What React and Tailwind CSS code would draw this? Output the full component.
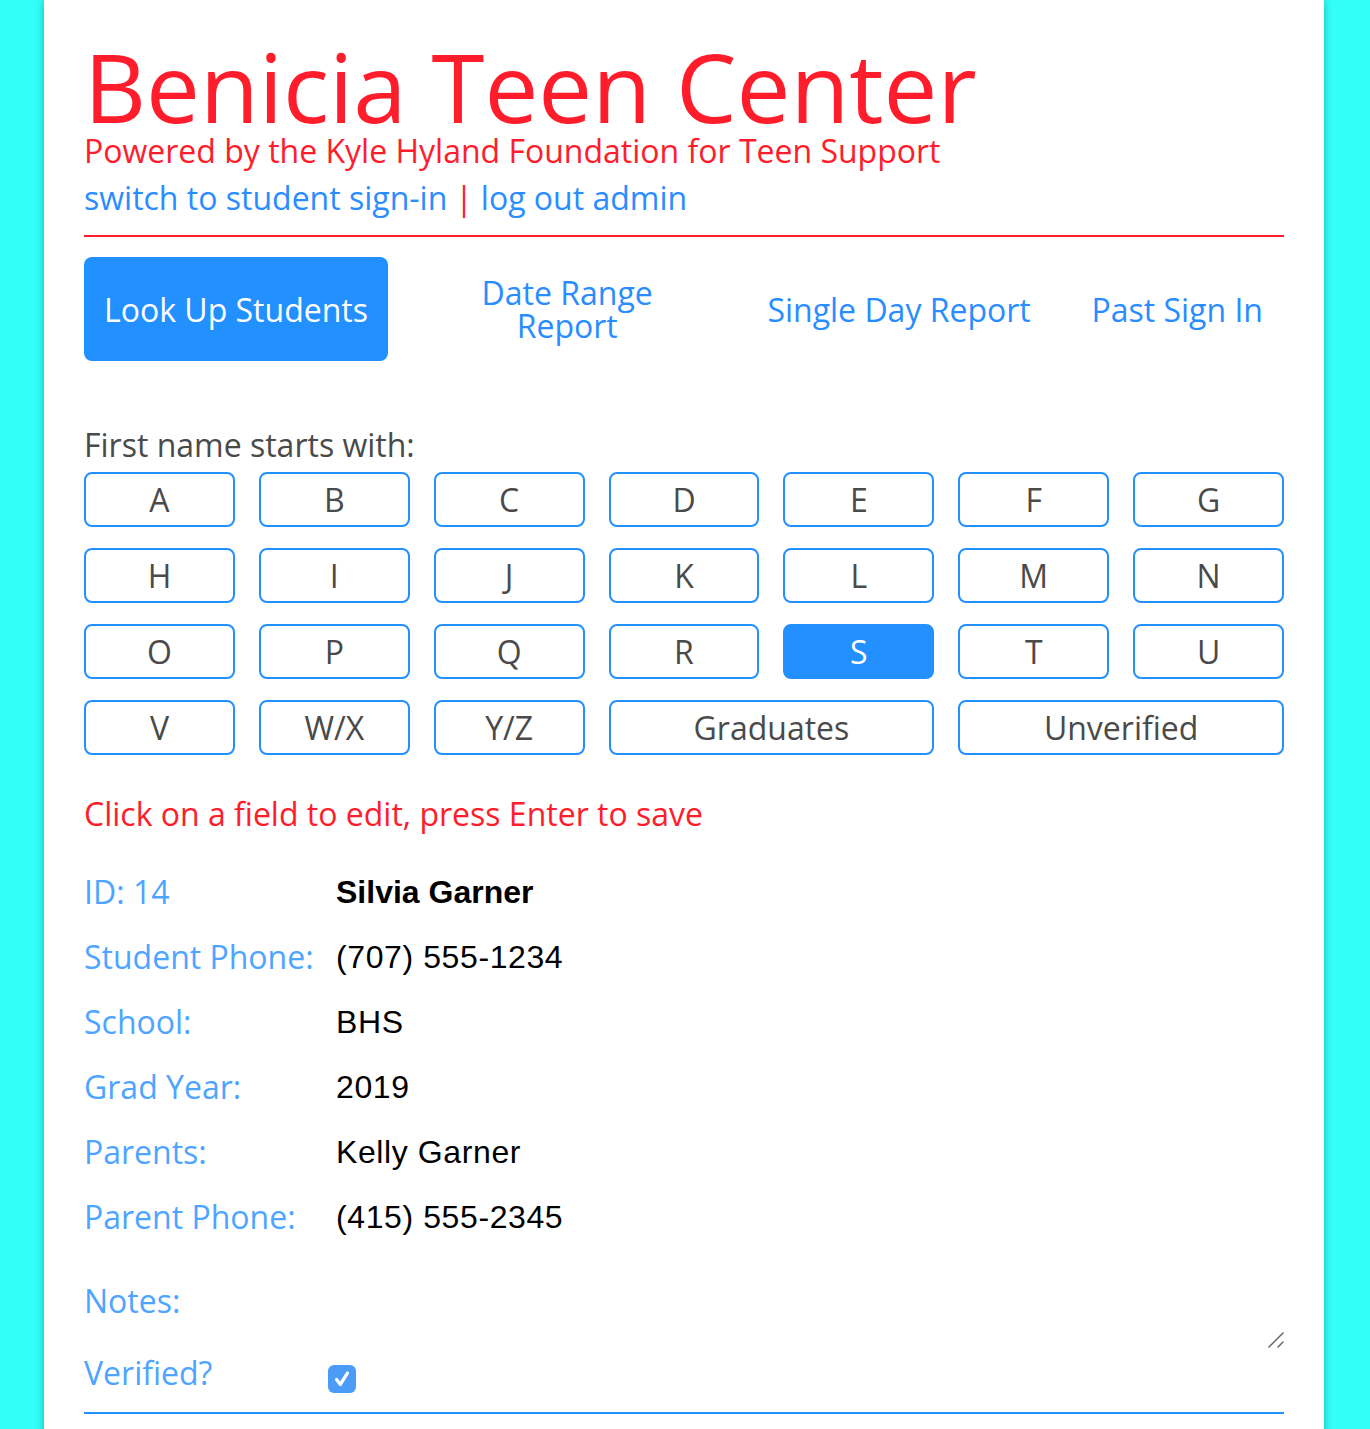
import { useState } from "react"

const letters = ["A", "B", "C", "D", "E", "F", "G", "H", "I", "J", "K", "L", "M", "N", "O", "P", "Q", "R", "S", "T", "U", "V", "W/X", "Y/Z"]

const fields = [
  { label: "Student Phone:", value: "(707) 555-1234" },
  { label: "School:", value: "BHS" },
  { label: "Grad Year:", value: "2019" },
  { label: "Parents:", value: "Kelly Garner" },
  { label: "Parent Phone:", value: "(415) 555-2345" }
]

const open = "font-['Open_Sans',sans-serif]"
const helv = "font-['Liberation_Sans',Arial,sans-serif]"

function LetterButton({ label, active, onClick, wide }) {
  return (
    <button
      onClick={onClick}
      className={`h-[55px] rounded-[8px] border-2 border-[#2290ff] text-[32px] leading-none ${open} ${
        wide ? "col-span-2" : ""
      } ${active ? "bg-[#2290ff] text-white" : "bg-white text-[#4a4a4a]"}`}
    >
      {label}
    </button>
  )
}

export default function App() {
  const [letter, setLetter] = useState("S")

  return (
    <div className="min-h-screen bg-[#33fff9]">
      <div className={`ml-[44px] w-[1280px] bg-white px-10 pt-[38px] pb-16 shadow-[0_0_8px_rgba(0,80,80,0.45)] ${open}`}>
        <h1 className="text-[96px] leading-[96px] text-[#ff1c2b]">Benicia Teen Center</h1>
        <p className="text-[32px] leading-[34px] text-[#ff1c2b]">Powered by the Kyle Hyland Foundation for Teen Support</p>
        <div className="mt-[13px] text-[32px] leading-[34px] text-[#2a8dff]">
          <a>switch to student sign-in</a>
          <span className="mx-[8px] text-[#ff1c2b]">|</span>
          <a>log out admin</a>
        </div>
        <div className="mt-[20px] h-[2px] bg-[#ff1c2b]" />

        <nav className="mt-[20px] flex items-center justify-between text-[32px] leading-[33px] text-[#2a8dff]">
          <button className="h-[104px] rounded-[8px] bg-[#2290ff] px-[20px] text-white">Look Up Students</button>
          <button className="w-[321px] text-center">
            <span className="block">Date Range</span>
            <span className="block">Report</span>
          </button>
          <button className="px-[21px]">Single Day Report</button>
          <button className="px-[21px]">Past Sign In</button>
        </nav>

        <p className="mt-[67px] text-[32px] leading-[34px] text-[#4a4a4a]">First name starts with:</p>
        <div className="mt-[10px] grid grid-cols-7 gap-x-[24px] gap-y-[21px]">
          {letters.map(l => (
            <LetterButton key={l} label={l} active={letter === l} onClick={() => setLetter(l)} />
          ))}
          <LetterButton label="Graduates" wide active={letter === "Graduates"} onClick={() => setLetter("Graduates")} />
          <LetterButton label="Unverified" wide active={letter === "Unverified"} onClick={() => setLetter("Unverified")} />
        </div>

        <p className="mt-[42px] text-[32px] leading-[34px] text-[#ff1c2b]">Click on a field to edit, press Enter to save</p>

        <div className="mt-[28px] text-[32px] leading-[34px]">
          <div className="flex h-[65px] items-center">
            <span className="w-[252px] text-[#4ea5ff]">ID: 14</span>
            <span className={`${helv} font-bold text-black`}>Silvia Garner</span>
          </div>
          {fields.map(f => (
            <div key={f.label} className="flex h-[65px] items-center">
              <span className="w-[252px] text-[#4ea5ff]">{f.label}</span>
              <span className={`${helv} tracking-[0.6px] text-black`}>{f.value}</span>
            </div>
          ))}

          <div className="mt-[35px] flex items-start">
            <span className="w-[252px] text-[#4ea5ff]">Notes:</span>
            <div className="relative h-[66px] flex-1">
              <textarea className="h-full w-full resize-none border-0 outline-none" />
              <svg viewBox="0 0 16 16" className="pointer-events-none absolute right-0 bottom-[2px] h-[16px] w-[16px]" stroke="#666" strokeWidth="1.5" strokeLinecap="round">
                <path d="M1 15L15 1M10 15l5-5" />
              </svg>
            </div>
          </div>
          <div className="mt-[6px] flex items-start">
            <span className="w-[244px] text-[#4ea5ff]">Verified?</span>
            <span className="mt-[9px] flex h-[28px] w-[28px] items-center justify-center rounded-[6px] bg-[#4a9cf6]">
              <svg viewBox="0 0 24 24" className="h-[26px] w-[26px]" fill="none" stroke="white" strokeWidth="3" strokeLinecap="round" strokeLinejoin="round">
                <path d="M7 12.5l3.5 4.5L17 6.5" />
              </svg>
            </span>
          </div>
        </div>
        <div className="mt-[19px] h-[2px] bg-[#2290ff]" />
      </div>
    </div>
  )
}
